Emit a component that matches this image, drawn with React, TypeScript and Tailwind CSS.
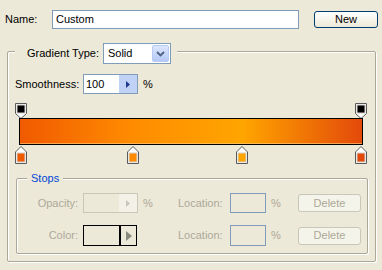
import React from "react";

const colorStops = [
  { p: 0, c: "#f05a00" },
  { p: 0.33, c: "#ff8c00" },
  { p: 0.65, c: "#ffa500" },
  { p: 1, c: "#e34a0a" },
];
const opacityStops = [{ p: 0 }, { p: 1 }];

const BAR_W = 344;
const stopX = (p: number) => 2 + p * 340;

function TopMarker() {
  return (
    <svg width="12" height="16" viewBox="0 0 12 16">
      <path d="M0.5 0.5 H11.5 V10.5 L6 15.5 L0.5 10.5 Z" fill="#ffffff" stroke="#5a5a5a" />
      <rect x="1.5" y="1.5" width="9" height="9" fill="#d4d0c8" />
      <rect x="2.5" y="2.5" width="7" height="7" fill="#000000" />
    </svg>
  );
}

function BottomMarker({ color }: { color: string }) {
  return (
    <svg width="12" height="18" viewBox="0 0 12 18">
      <path d="M6 0.5 L11.5 6 V17.5 H0.5 V6 Z" fill="#ffffff" stroke="#5a5a5a" />
      <rect x="1.5" y="6.5" width="9" height="10" fill="#d4d0c8" />
      <rect x="2.5" y="7.5" width="7" height="8" fill={color} />
    </svg>
  );
}

function DisabledButton({ label }: { label: string }) {
  return (
    <div className="w-[63px] h-[18px] rounded-[3px] border border-[#c9c7ba] bg-[#f5f4ea] flex items-center justify-center text-[#aca899]">
      {label}
    </div>
  );
}

export default function App() {
  const gradient = `linear-gradient(to right, ${colorStops
    .map((s) => `${s.c} ${Math.round(s.p * 100)}%`)
    .join(", ")})`;

  return (
    <div
      className="w-[382px] h-[270px] bg-[#ece9d8] text-black text-[11px] leading-[13px] overflow-hidden"
      style={{ fontFamily: '"Liberation Sans", Arial, sans-serif' }}
    >
      {/* Name row */}
      <div className="flex items-center pt-[10px] pl-[5px]">
        <div className="w-[47px]">Name:</div>
        <div className="w-[247px] h-[19px] border border-[#7f9db9] bg-white flex items-center pl-[3px]">
          Custom
        </div>
        <div className="ml-[15px] w-[64px] h-[17px] rounded-[3px] border border-[#003c74] bg-gradient-to-b from-white to-[#ece9d8] flex items-center justify-center">
          New
        </div>
      </div>

      {/* Outer group */}
      <fieldset className="mt-[12px] ml-[7px] w-[369px] h-[221px] border border-[#aca899] rounded-[2px] shadow-[inset_1px_1px_0_#ffffff,1px_1px_0_#ffffff]">
        <legend className="ml-[7px] pl-[12px] pr-[6px] h-[20px] bg-[#ece9d8]">
          <div className="relative top-[2px] flex items-center h-[21px]">
            <span className="mr-[4px]">Gradient Type:</span>
            <div className="w-[68px] h-[21px] border border-[#7f9db9] bg-white flex items-center">
              <span className="pl-[4px] flex-1">Solid</span>
              <div className="w-[17px] h-[17px] mr-[1px] rounded-[2px] border border-[#b9cbf3] bg-gradient-to-b from-[#dce6fd] to-[#b5c9f6] flex items-center justify-center">
                <svg width="9" height="6" viewBox="0 0 9 6">
                  <path d="M1 1 L4.5 4.5 L8 1" fill="none" stroke="#4d6185" strokeWidth="1.8" />
                </svg>
              </div>
            </div>
          </div>
        </legend>

        {/* Smoothness */}
        <div className="flex items-center mt-[13px] pl-[7px]">
          <div className="w-[68px]">Smoothness:</div>
          <div className="w-[55px] h-[20px] border border-[#7f9db9] bg-white flex">
            <span className="flex-1 pl-[2px] flex items-center">100</span>
            <div className="w-[18px] bg-[#c1d2f7] flex items-center justify-center">
              <svg width="4" height="7" viewBox="0 0 4 7">
                <path d="M0 0 L4 3.5 L0 7 Z" fill="#1e3a8a" />
              </svg>
            </div>
          </div>
          <span className="ml-[5px]">%</span>
        </div>

        {/* Gradient bar with stops */}
        <div className="relative mt-[9px] ml-[11px] h-[61px]" style={{ width: BAR_W }}>
          {opacityStops.map((s, i) => (
            <div key={i} className="absolute top-0" style={{ left: stopX(s.p) - 6 }}>
              <TopMarker />
            </div>
          ))}
          <div
            className="absolute top-[15px] left-0 h-[27px] border border-black"
            style={{ width: BAR_W, background: gradient }}
          >
            <div className="absolute left-0 right-0 bottom-0 h-[1px] bg-[#ffd08a] opacity-60" />
          </div>
          {colorStops.map((s, i) => (
            <div key={i} className="absolute top-[43px]" style={{ left: stopX(s.p) - 6 }}>
              <BottomMarker color={s.c} />
            </div>
          ))}
        </div>

        {/* Stops group */}
        <fieldset className="mt-[7px] ml-[8px] w-[352px] h-[83px] border border-[#aca899] rounded-[2px] shadow-[inset_1px_1px_0_#ffffff,1px_1px_0_#ffffff]">
          <legend className="ml-[10px] px-[4px] leading-[14px] text-[#0046d5] bg-[#ece9d8]">Stops</legend>

          <div className="flex items-center mt-[8px] text-[#aca899]">
            <div className="w-[66px] text-right pr-[5px]">Opacity:</div>
            <div className="w-[55px] h-[20px] border border-[#c9c7ba] flex">
              <span className="flex-1" />
              <div className="w-[18px] bg-[#f3f1e8] flex items-center justify-center">
                <svg width="4" height="7" viewBox="0 0 4 7">
                  <path d="M0 0 L4 3.5 L0 7 Z" fill="#c9c7ba" />
                </svg>
              </div>
            </div>
            <div className="w-[40px] pl-[5px]">%</div>
            <div className="w-[52px]">Location:</div>
            <div className="w-[36px] h-[20px] border border-[#7f9db9]" />
            <div className="w-[32px] pl-[5px]">%</div>
            <DisabledButton label="Delete" />
          </div>

          <div className="flex items-center mt-[12px] text-[#aca899]">
            <div className="w-[66px] text-right pr-[5px]">Color:</div>
            <div className="w-[54px] h-[21px] border border-black flex">
              <span className="flex-1" />
              <div className="w-[17px] border-l-2 border-black flex items-center justify-center">
                <svg width="6" height="10" viewBox="0 0 6 10">
                  <path d="M0 0 L6 5 L0 10 Z" fill="#8a8a7e" />
                </svg>
              </div>
            </div>
            <div className="w-[41px]" />
            <div className="w-[52px]">Location:</div>
            <div className="w-[36px] h-[21px] border border-[#7f9db9]" />
            <div className="w-[32px] pl-[5px]">%</div>
            <DisabledButton label="Delete" />
          </div>
        </fieldset>
      </fieldset>
    </div>
  );
}
